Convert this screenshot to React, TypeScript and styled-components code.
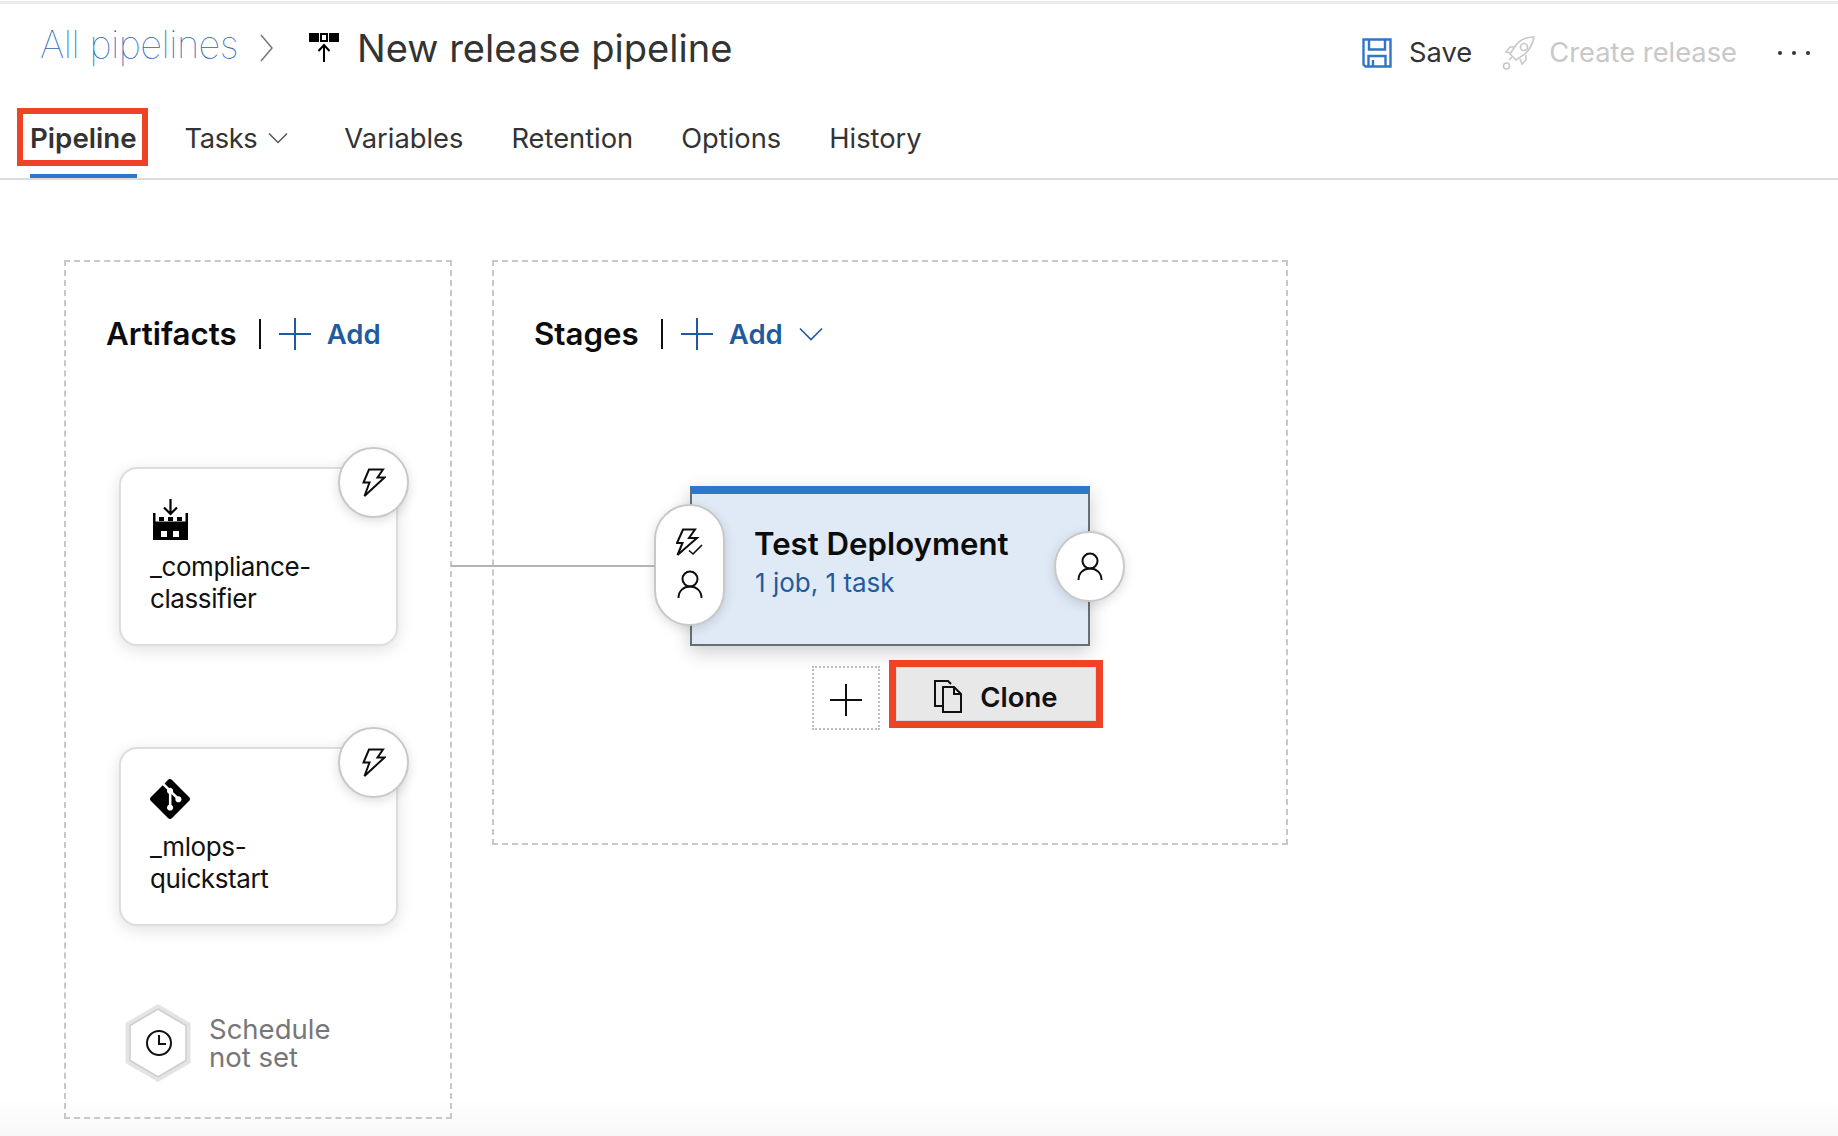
import React from 'react';
import styled, { createGlobalStyle } from 'styled-components';
import { SiGit } from 'react-icons/si';

const GlobalStyle = createGlobalStyle`
    html, body {
        margin: 0;
        padding: 0;
        background: #fff;
    }
    body {
        font-family: Inter, "Noto Sans", "Liberation Sans", sans-serif;
        color: #111;
    }
`;

const Page = styled.div`
    position: relative;
    width: 1838px;
    height: 1136px;
    overflow: hidden;
    box-sizing: border-box;
    border-top: 3px solid #ececec;
    margin-top: 1px;
    background: linear-gradient(to bottom, #fff 0, #fff 1095px, #f8f8f8 1130px);
`;

const TopBar = styled.header`
    display: flex;
    align-items: center;
    height: 88px;
    padding: 0 28px 0 40px;
    box-sizing: border-box;
`;

const Crumb = styled.span`
    margin-bottom: 9px;
    font-size: 38px;
    font-weight: 100;
    letter-spacing: -0.5px;
    color: #1f66b8;
`;

const CrumbChevron = styled.svg`
    width: 13px;
    height: 28px;
    margin: 0 36px 0 22px;
    fill: none;
    stroke: #777;
    stroke-width: 1.5;
`;

const Title = styled.h1`
    margin: 0 0 0 18px;
    font-size: 38.1px;
    font-weight: 400;
    color: #333;
`;

const Actions = styled.div`
    display: flex;
    align-items: center;
    margin-left: auto;
    padding-top: 9px;
`;

const ActionLabel = styled.span<{ $disabled?: boolean }>`
    font-size: 27.3px;
    color: ${props => (props.$disabled ? '#c8c8c8' : '#333')};
    margin-left: ${props => (props.$disabled ? '13px' : '17px')};
`;

const RocketIcon = styled.svg`
    width: 34px;
    height: 36px;
    margin-left: 30px;
    fill: none;
    stroke: #c8c8c8;
    stroke-width: 1.6;
`;

const MoreDots = styled.div`
    display: flex;
    gap: 10px;
    margin-left: 41px;
    margin-right: 0;

    i {
        width: 4px;
        height: 4px;
        border-radius: 50%;
        background: #333;
    }
`;

const TabBar = styled.nav`
    display: flex;
    align-items: center;
    height: 86px;
    padding: 0 0 0 30px;
    border-bottom: 2px solid #dcdcdc;
    box-sizing: content-box;
`;

const Tab = styled.a<{ $active?: boolean; $gap?: number }>`
    position: relative;
    display: flex;
    align-items: center;
    height: 100%;
    box-sizing: border-box;
    padding-top: 6px;
    margin-right: ${props => props.$gap ?? 48}px;
    font-size: ${props => (props.$active ? 27.7 : 27.3)}px;
    font-weight: ${props => (props.$active ? 600 : 400)};
    color: #333;

    ${props => props.$active && `
        &::after {
            content: '';
            position: absolute;
            left: 0;
            right: 0;
            bottom: 0;
            height: 4px;
            background: #2f75c9;
        }
    `}
`;

const TabLabelTight = styled.span`
    letter-spacing: -0.4px;
`;

const TabHighlight = styled.span`
    position: absolute;
    left: -13px;
    right: -11px;
    top: 16px;
    height: 58px;
    box-sizing: border-box;
    border: 6px solid #ee4327;
`;

const TabChevron = styled.svg`
    width: 20px;
    height: 12px;
    margin-left: 11px;
    fill: none;
    stroke: #555;
    stroke-width: 1.5;
`;

const Canvas = styled.main`
    position: relative;
    display: flex;
    align-items: flex-start;
    gap: 40px;
    padding: 80px 0 0 64px;
`;

const Connector = styled.div`
    position: absolute;
    left: 451px;
    top: 385px;
    width: 204px;
    height: 2px;
    background: #b4b4b4;
`;

const Panel = styled.section<{ $width: number; $height: number }>`
    position: relative;
    width: ${props => props.$width}px;
    height: ${props => props.$height}px;
    box-sizing: border-box;
    border: 2px dashed #c8c8c8;
    padding: 54px 0 0 40px;
`;

const PanelHeader = styled.div`
    display: flex;
    align-items: center;
    height: 36px;
`;

const PanelTitle = styled.h2`
    margin: 0;
    font-size: 31.3px;
    font-weight: 600;
    color: #0c0c0c;
`;

const Divider = styled.span`
    width: 2px;
    height: 30px;
    margin: 0 18px 0 22px;
    background: #111;
`;

const PlusIcon = styled.svg<{ $color?: string }>`
    flex: none;
    width: 32px;
    height: 32px;
    fill: none;
    stroke: ${props => props.$color || '#1f5b9f'};
    stroke-width: 2;
`;

const AddLabel = styled.span`
    margin-left: 16px;
    font-size: 27.5px;
    font-weight: 600;
    color: #1f5b9f;
`;

const AddChevron = styled.svg`
    width: 24px;
    height: 14px;
    margin-left: 16px;
    fill: none;
    stroke: #1f5b9f;
    stroke-width: 1.6;
`;

const ArtifactList = styled.div`
    display: flex;
    flex-direction: column;
    gap: 101px;
    margin: 115px 0 0 13px;
`;

const ArtifactCard = styled.article`
    position: relative;
    width: 279px;
    height: 179px;
    box-sizing: border-box;
    padding: 30px 0 0 29px;
    background: #fff;
    border: 2px solid #dedede;
    border-radius: 18px;
    box-shadow: 0 4px 16px rgba(0, 0, 0, 0.12);
`;

const ArtifactIcon = styled.div<{ $inset: number }>`
    display: flex;
    height: 42px;
    margin-bottom: 10px;
    padding-left: ${props => props.$inset}px;
`;

const ArtifactName = styled.div`
    font-size: 26px;
    letter-spacing: -0.4px;
    line-height: 32px;
    color: #111;
    white-space: pre-line;
`;

const RoundBadge = styled.div<{ $top: number; $right: number }>`
    position: absolute;
    top: ${props => props.$top}px;
    right: ${props => props.$right}px;
    display: flex;
    align-items: center;
    justify-content: center;
    width: 71px;
    height: 71px;
    box-sizing: border-box;
    background: #fff;
    border: 2px solid #c8c8c8;
    border-radius: 50%;
    box-shadow: 0 3px 12px rgba(0, 0, 0, 0.14);
`;

const Schedule = styled.div`
    display: flex;
    align-items: center;
    gap: 17px;
    margin: 78px 0 0 18px;
`;

const ScheduleText = styled.div`
    font-size: 27.5px;
    line-height: 28px;
    color: #777;
    white-space: pre-line;
`;

const StageNode = styled.div`
    position: relative;
    width: 400px;
    margin: 134px 0 0 156px;
`;

const StageCard = styled.article`
    height: 160px;
    box-sizing: border-box;
    padding: 31px 0 0 62px;
    background: #e0eaf6;
    border: 2px solid #666e76;
    border-top: 8px solid #2f75c9;
    box-shadow: 0 6px 18px rgba(0, 0, 0, 0.2);
`;

const StageTitle = styled.div`
    font-size: 31.2px;
    line-height: 38px;
    font-weight: 600;
    color: #0c0c0c;
`;

const StageMeta = styled.div`
    margin: 4px 0 0 1px;
    font-size: 26px;
    line-height: 32px;
    color: #1f5b9f;
`;

const TriggerPill = styled.div`
    position: absolute;
    left: -36px;
    top: 18px;
    display: flex;
    flex-direction: column;
    align-items: center;
    justify-content: center;
    gap: 13px;
    width: 71px;
    height: 122px;
    padding-bottom: 4px;
    box-sizing: border-box;
    background: #fff;
    border: 2px solid #c8c8c8;
    border-radius: 36px;
    box-shadow: 0 3px 12px rgba(0, 0, 0, 0.14);
`;

const StageActions = styled.div`
    display: flex;
    align-items: flex-start;
    margin: 14px 0 0 122px;
`;

const AddStageBox = styled.div`
    flex: none;
    display: flex;
    align-items: center;
    justify-content: center;
    width: 68px;
    height: 64px;
    margin-top: 6px;
    padding-top: 3px;
    box-sizing: border-box;
    border: 2px dotted #bdbdbd;
`;

const CloneButton = styled.button`
    flex: none;
    display: flex;
    align-items: center;
    justify-content: center;
    gap: 18px;
    width: 214px;
    height: 68px;
    margin-left: 9px;
    padding: 5px 0 0;
    box-sizing: border-box;
    background: #e8e8e8;
    border: 7px solid #ee4327;
    outline: 1px solid #d8d8d8;
    outline-offset: -8px;
    font-family: inherit;
    font-size: 27.5px;
    font-weight: 600;
    color: #111;
`;

const Bolt = () => (
    <svg width="24" height="30" viewBox="0 0 24 30" fill="none" stroke="#0c0c0c" strokeWidth="2">
        <path d="M7 1.500h14l-5.500 8H22.500L2.500 28l5-13.500H1.500z" />
    </svg>
);

const BoltCheck = () => (
    <svg width="28" height="29" viewBox="0 0 28 29" fill="none" stroke="#0c0c0c" strokeWidth="2">
        <path d="M7 1.500h12l-6 8.500h8L1.500 27l5-12h-5.500z" />
        <path d="M13 22.500l4 3.500 9-9" strokeWidth="1.600" />
    </svg>
);

const Person = () => (
    <svg width="26" height="29" viewBox="0 0 26 29" fill="none" stroke="#0c0c0c" strokeWidth="2">
        <circle cx="13" cy="9" r="7.500" />
        <path d="M1.500 28c0-7 5-11.500 11.500-11.500S24.500 21 24.500 28" />
    </svg>
);

const FactoryIcon = () => (
    <svg width="35" height="41" viewBox="0 0 35 41">
        <path d="M17.500 0v14M11 8.500l6.500 6.500L24 8.500" fill="none" stroke="#000" strokeWidth="2.200" />
        <path fillRule="evenodd" d="M0 14h2.500v8.500h30V14H35v27H0zM8 32h6v6H8zM20 32h6v6h-6z" />
        <path d="M6 18h5v4H6zM15 18h5v4h-5zM24 18h5v4h-5z" />
    </svg>
);

export default function App() {
    return (
        <Page>
            <GlobalStyle />
            <TopBar>
                <Crumb>All pipelines</Crumb>
                <CrumbChevron viewBox="0 0 13 28">
                    <path d="M1 1l11 13L1 27" />
                </CrumbChevron>
                <svg width="30" height="30" viewBox="0 0 30 30">
                    <path d="M0 0h10v9H0zM20 0h10v9H20z" />
                    <path d="M11 0h8v9h-8zM13 2v5h4V2z" fillRule="evenodd" />
                    <path d="M15 29V13M9.500 18L15 12l5.500 6" fill="none" stroke="#000" strokeWidth="2" />
                </svg>
                <Title>New release pipeline</Title>
                <Actions>
                    <svg width="30" height="30" viewBox="0 0 30 30" fill="none" stroke="#2f75c9" strokeWidth="2.400">
                        <path d="M1.500 1.500h27v27h-25l-2-2z" />
                        <path d="M7 1.500v10h16v-10M6.500 28.500V18h17v10.500M11 22v6.500" />
                    </svg>
                    <ActionLabel>Save</ActionLabel>
                    <RocketIcon viewBox="0 0 34 36">
                        <path d="M32 2c-8 0-14 3-18 8l-6 9 6 6 9-6c5-5 8-11 9-17z" />
                        <circle cx="22" cy="12" r="3.500" />
                        <path d="M13 12H8l-4 5 5 1M24 20v5l-4 4-2-5M10 22l-3 3" />
                        <circle cx="4.500" cy="31" r="3" />
                    </RocketIcon>
                    <ActionLabel $disabled>Create release</ActionLabel>
                    <MoreDots>
                        <i />
                        <i />
                        <i />
                    </MoreDots>
                </Actions>
            </TopBar>
            <TabBar>
                <Tab $active $gap={48}>
                    Pipeline
                    <TabHighlight />
                </Tab>
                <Tab $gap={56}>
                    <TabLabelTight>Tasks</TabLabelTight>
                    <TabChevron viewBox="0 0 20 12">
                        <path d="M1 1.500l9 9 9-9" />
                    </TabChevron>
                </Tab>
                <Tab>Variables</Tab>
                <Tab>Retention</Tab>
                <Tab>Options</Tab>
                <Tab>History</Tab>
            </TabBar>
            <Canvas>
                <Panel $width={388} $height={859}>
                    <PanelHeader>
                        <PanelTitle>Artifacts</PanelTitle>
                        <Divider />
                        <PlusIcon viewBox="0 0 32 32">
                            <path d="M0 16h32M16 0v32" />
                        </PlusIcon>
                        <AddLabel>Add</AddLabel>
                    </PanelHeader>
                    <ArtifactList>
                        <ArtifactCard>
                            <ArtifactIcon $inset={3}>
                                <FactoryIcon />
                            </ArtifactIcon>
                            <ArtifactName>{'_compliance-\nclassifier'}</ArtifactName>
                            <RoundBadge $top={-22} $right={-13}>
                                <Bolt />
                            </RoundBadge>
                        </ArtifactCard>
                        <ArtifactCard>
                            <ArtifactIcon $inset={0}>
                                <SiGit size={40} color="#000" />
                            </ArtifactIcon>
                            <ArtifactName>{'_mlops-\nquickstart'}</ArtifactName>
                            <RoundBadge $top={-22} $right={-13}>
                                <Bolt />
                            </RoundBadge>
                        </ArtifactCard>
                    </ArtifactList>
                    <Schedule>
                        <svg width="68" height="78" viewBox="0 0 68 78" fill="none">
                            <path d="M34 3l30 17.500v37L34 75 4 57.500v-37z" stroke="#e4e4e4" strokeWidth="5" />
                            <path d="M34 5l28 16.500v35L34 73 6 56.500v-35z" stroke="#cfcfcf" strokeWidth="1.500" />
                            <circle cx="35" cy="39" r="12" stroke="#111" strokeWidth="2" />
                            <path d="M35 31v9h7" stroke="#111" strokeWidth="2" />
                        </svg>
                        <ScheduleText>{'Schedule\nnot set'}</ScheduleText>
                    </Schedule>
                </Panel>
                <Panel $width={796} $height={585}>
                    <PanelHeader>
                        <PanelTitle>Stages</PanelTitle>
                        <Divider />
                        <PlusIcon viewBox="0 0 32 32">
                            <path d="M0 16h32M16 0v32" />
                        </PlusIcon>
                        <AddLabel>Add</AddLabel>
                        <AddChevron viewBox="0 0 24 14">
                            <path d="M1 1.500l11 11 11-11" />
                        </AddChevron>
                    </PanelHeader>
                    <StageNode>
                        <StageCard>
                            <StageTitle>Test Deployment</StageTitle>
                            <StageMeta>1 job, 1 task</StageMeta>
                        </StageCard>
                        <TriggerPill>
                            <BoltCheck />
                            <Person />
                        </TriggerPill>
                        <RoundBadge $top={45} $right={-35}>
                            <Person />
                        </RoundBadge>
                        <StageActions>
                            <AddStageBox>
                                <PlusIcon $color="#111" viewBox="0 0 32 32">
                                    <path d="M0 16h32M16 0v32" />
                                </PlusIcon>
                            </AddStageBox>
                            <CloneButton>
                                <svg width="28" height="33" viewBox="0 0 28 33" fill="none" stroke="#111" strokeWidth="2">
                                    <path d="M9 26H1V1h13l3 3" />
                                    <path d="M9 7h11l7 7v18H9zM20 7v7h7" />
                                </svg>
                                Clone
                            </CloneButton>
                        </StageActions>
                    </StageNode>
                </Panel>
                <Connector />
            </Canvas>
        </Page>
    );
}
